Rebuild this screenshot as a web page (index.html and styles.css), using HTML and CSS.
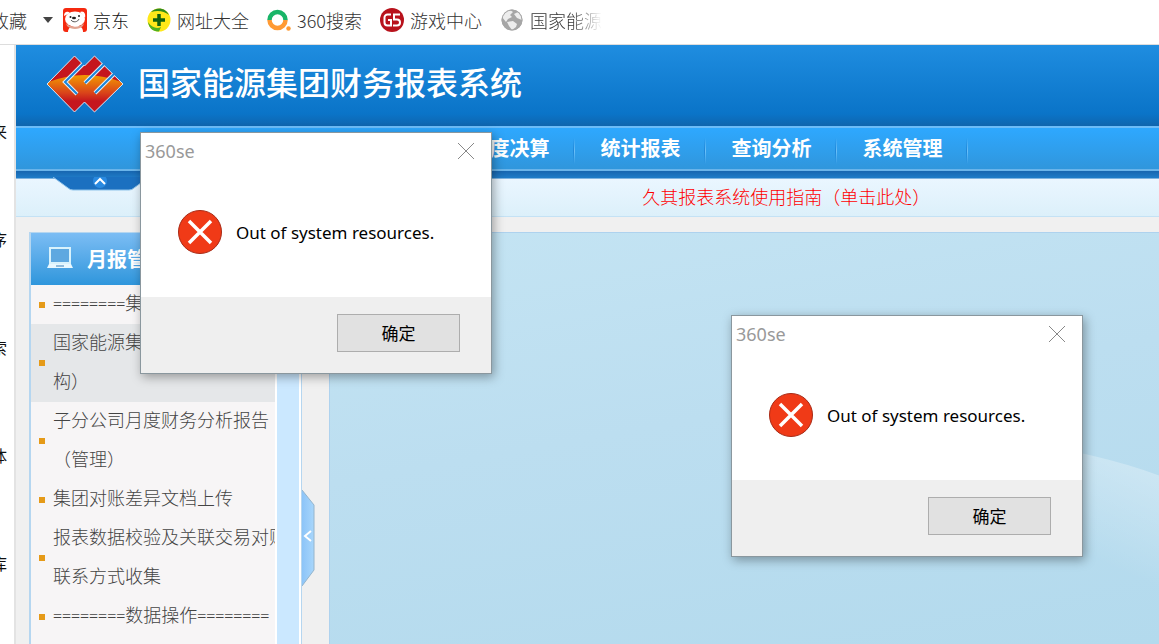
FILE: index.html
```html
<!DOCTYPE html>
<html lang="zh-CN">
<head>
  <meta charset="UTF-8" />
  <title>国家能源集团财务报表系统</title>
  <link rel="stylesheet" href="styles.css">
</head>
<body>
  <nav class="bookmarks">
    <div class="fav"><a href="#">收藏</a></div>
    <span class="caret"></span>
    <a href="#" class="dark">
      <svg width="24" height="24" viewBox="0 0 24 24">
        <rect width="24" height="24" rx="3" fill="#f5290f"/>
        <path d="M5 24c0-4 3-6 8-6s7 2 7 6z" fill="#fff"/>
        <ellipse cx="12" cy="11" rx="10" ry="7.500" fill="#fff"/>
        <path d="M1 8c0-5 4-5 6-3zM17 4c4-2 6 2 5 6z" fill="#fff"/>
        <path d="M3 15c4 5 14 5 18 0l-1 3c-4 4-12 4-16 0z" fill="#e0a592"/>
        <circle cx="7.500" cy="9" r="1" fill="#222"/><circle cx="16" cy="8" r="1" fill="#222"/>
        <ellipse cx="11" cy="10" rx="2" ry="1.200" fill="#222"/>
        <path d="M8 12c2 3 7 2 8-1" stroke="#555" fill="none"/>
      </svg>京东</a>
    <a href="#">
      <svg width="24" height="24" viewBox="0 0 24 24">
        <circle cx="12" cy="12" r="11.500" fill="#ffe81a"/>
        <path d="M4 4C9-1 18-1 22 7c-5-4-11-5-18-3z" fill="#2f8a1c"/>
        <path d="M1 14c4 6 9 7 13 5l-2 4.500C6 24 2 20 1 14z" fill="#4fb020"/>
        <path d="M12 6v12M6 12h12" stroke="#12600f" stroke-width="3.500"/>
      </svg>网址大全</a>
    <a href="#">
      <svg width="24" height="24" viewBox="0 0 24 24">
        <path d="M2.500 12a8 8 0 0 1 16 0" stroke="#19b568" stroke-width="4.500" fill="none"/>
        <path d="M2.500 12a8 8 0 0 0 16 0" stroke="#ff9a33" stroke-width="4.500" fill="none"/>
        <circle cx="21.500" cy="20.500" r="2.200" fill="#ff9a33"/>
      </svg>360搜索</a>
    <a href="#">
      <svg width="24" height="24" viewBox="0 0 24 24">
        <circle cx="12" cy="12" r="12" fill="#b8121c"/>
        <path d="M11 6.500H7.500a3 3 0 0 0-3 3v5a3 3 0 0 0 3 3H11V12H8M20 6.500h-6v5h3a2.800 2.800 0 0 1 0 6h-4" stroke="#fff" stroke-width="2" fill="none"/>
      </svg>游戏中心</a>
    <a href="#" class="fade">
      <svg width="24" height="24" viewBox="0 0 24 24">
        <circle cx="12" cy="12" r="10.500" fill="#a6a6a6"/>
        <path d="M2 9c1-4 4-6 8-7l3 2-3 3 2 2-4 2-2 3zM14 6l4-2c3 2 4 5 4 8l-5-2zM7 14l6-1 4 3-1 3-4 3-3-4z" fill="#fff" opacity=".8"/>
        <circle cx="12" cy="12" r="10" fill="none" stroke="#a6a6a6"/>
      </svg>国家能源</a>
  </nav>

  <div class="window">
    <aside class="rail">
      <span>来</span><span>程序</span><span>搜索</span><span>字体</span><span>仓库</span>
    </aside>

    <div class="app">
      <header class="banner">
        <svg width="78" height="58" viewBox="0 0 78 58">
          <defs>
            <linearGradient id="sun" x1="0" y1="0" x2="0" y2="1">
              <stop offset="0" stop-color="#f39a00"/><stop offset=".7" stop-color="#d9421a"/><stop offset="1" stop-color="#c5161d"/>
            </linearGradient>
            <clipPath id="mark"><path d="M1 29L28.500 1L38.500 11L48.500 1L77 29L48.500 57L38.500 47L28.500 57z"/></clipPath>
          </defs>
          <g clip-path="url(#mark)">
            <rect width="78" height="58" fill="#c5161d"/>
            <path d="M0 28Q39 12 78 28V46H0z" fill="url(#sun)"/>
            <path d="M43 3L19 27L31 39M63 4L39 28M73 14L49 38" fill="none" stroke="#e6f0fa" stroke-width="4"/>
          </g>
          <path d="M1 29L28.500 1L38.500 11L48.500 1L77 29L48.500 57L38.500 47L28.500 57z" fill="none" stroke="#dbe8f5"/>
          <path d="M41 5L19 27L31 39M61 6L39 28M71 16L49 38" fill="none" stroke="#1a84d8" stroke-width="2"/>
        </svg>
        <h1>国家能源集团财务报表系统</h1>
      </header>

      <nav class="menu">
        <a href="#" class="active">月度快报</a>
        <a href="#">年度决算</a>
        <a href="#">统计报表</a>
        <a href="#">查询分析</a>
        <a href="#">系统管理</a>
      </nav>

      <div class="strip">
        <button class="fold" aria-label="收起">
          <svg width="96" height="14" viewBox="0 0 96 14">
            <path d="M0 0L15 11Q17 13 20 13H76Q79 13 81 11L96 0z" fill="#1b70c0"/>
            <path d="M0 0L15 11Q17 13 20 13H76Q79 13 81 11L96 0" fill="none" stroke="#8fc3ea"/>
            <circle cx="47" cy="4" r="7" fill="#2a8ae0"/>
            <path d="M42 7L47 2L52 7" fill="none" stroke="#fff" stroke-width="2"/>
          </svg>
        </button>
      </div>

      <div class="notice"><a href="#">久其报表系统使用指南（单击此处）</a></div>

      <main class="body">
        <section class="side">
          <div class="side-main">
            <h2>
              <svg width="28" height="24" viewBox="0 0 28 24">
                <rect x="4" y="2" width="20" height="15" fill="#5ea8e0" stroke="#d8f2fc" stroke-width="2"/>
                <path d="M3 18h22l2 4H1z" fill="#e8f8ff"/><path d="M10 20h8" stroke="#3a80b8" stroke-width="1"/>
              </svg>月报管理
            </h2>
            <ul>
              <li><a href="#"><span class="eq">========</span>集</a></li>
              <li class="on"><a href="#">国家能源集团<br>构）</a></li>
              <li><a href="#">子分公司月度财务分析报告（管理）</a></li>
              <li><a href="#">集团对账差异文档上传</a></li>
              <li><a href="#" class="long">报表数据校验及关联交易对账<br>联系方式收集</a></li>
              <li><a href="#"><span class="eq">========</span>数据操作<span class="eq">========</span></a></li>
            </ul>
          </div>
          <div class="side-bar"></div>
        </section>
        <div class="split">
          <button aria-label="隐藏菜单">
            <svg width="13" height="96" viewBox="0 0 13 96">
              <defs>
                <linearGradient id="grip"><stop offset="0" stop-color="#8cc4f8"/><stop offset="1" stop-color="#a8d6fb"/></linearGradient>
              </defs>
              <path d="M0 0L12 15V80L0 96z" fill="url(#grip)"/>
              <path d="M0 0L12 15V80L0 96" fill="none" stroke="#93b4cc"/>
              <path d="M9 41L3 46L9 51" fill="none" stroke="#fff" stroke-width="2"/>
            </svg>
          </button>
        </div>
        <section class="content">
          <svg viewBox="0 0 100 100" preserveAspectRatio="none">
            <defs>
              <linearGradient id="glow" x1=".7" y1="0" x2=".5" y2=".55">
                <stop offset="0" stop-color="#fff" stop-opacity=".32"/><stop offset="1" stop-color="#fff" stop-opacity="0"/>
              </linearGradient>
            </defs>
            <path d="M80 50Q92 53 100 59V100H80z" fill="url(#glow)"/>
          </svg>
        </section>
      </main>
    </div>
  </div>

  <div class="dialog first" role="alertdialog">
    <div class="dialog-title">360se
      <button class="close" aria-label="关闭"><svg width="16" height="16" viewBox="0 0 16 16"><path d="M0 0L16 16M16 0L0 16" stroke="#888"/></svg></button>
    </div>
    <div class="dialog-text">
      <svg width="44" height="44" viewBox="0 0 44 44"><circle cx="22" cy="22" r="21.500" fill="#f03a17" stroke="#a82a16"/><path d="M11 11L33 33M33 11L11 33" stroke="#fff" stroke-width="3.500"/></svg>
      Out of system resources.
    </div>
    <div class="dialog-foot"><button class="ok">确定</button></div>
  </div>

  <div class="dialog second" role="alertdialog">
    <div class="dialog-title">360se
      <button class="close" aria-label="关闭"><svg width="16" height="16" viewBox="0 0 16 16"><path d="M0 0L16 16M16 0L0 16" stroke="#888"/></svg></button>
    </div>
    <div class="dialog-text">
      <svg width="44" height="44" viewBox="0 0 44 44"><circle cx="22" cy="22" r="21.500" fill="#f03a17" stroke="#a82a16"/><path d="M11 11L33 33M33 11L11 33" stroke="#fff" stroke-width="3.500"/></svg>
      Out of system resources.
    </div>
    <div class="dialog-foot"><button class="ok">确定</button></div>
  </div>
</body>
</html>
```
FILE: styles.css
```css
* { box-sizing: border-box; }
body { margin: 0; height: 100vh; overflow: hidden; display: flex; flex-direction: column; position: relative; background: #fff; font-family: "Noto Sans", "Noto Sans CJK SC", sans-serif; font-size: 18px; color: #444; }
a { color: inherit; text-decoration: none; }
button { padding: 0; border: none; background: none; font: inherit; cursor: pointer; }
svg { display: block; flex: none; }
h1, h2, ul { margin: 0; padding: 0; }

/* bookmarks */
.bookmarks { height: 45px; padding-bottom: 4px; border-bottom: 1px solid #ddd; display: flex; align-items: center; gap: 18px; font-family: "Noto Sans CJK SC", sans-serif; font-weight: 300; color: #333; white-space: nowrap; }
.bookmarks a { display: flex; align-items: center; gap: 6px; line-height: 24px; }
.bookmarks .fav { width: 27px; overflow: hidden; display: flex; justify-content: flex-end; margin-right: -2px; }
.bookmarks .dark { color: #111; margin-left: -8px; }
.caret { border: 5px solid transparent; border-top: 6px solid #444; border-bottom: 0; }
.fade { -webkit-mask-image: linear-gradient(to right, #000 70%, transparent); mask-image: linear-gradient(to right, #000 70%, transparent); }

.window { flex: 1; display: flex; min-height: 0; }
.rail { width: 16px; padding: 75px 7px 0 0; border-right: 2px solid #e3e3e3; overflow: hidden; display: flex; flex-direction: column; align-items: flex-end; gap: 84px; color: #111; font-size: 16px; line-height: 24px; white-space: nowrap; }
.app { flex: 1; min-width: 0; display: flex; flex-direction: column; background: #f0f0f0; font-family: "Noto Sans CJK SC", sans-serif; }

/* banner and menu */
.banner { height: 81px; padding: 0 30px 4px; display: flex; align-items: center; gap: 14px; background: linear-gradient(#1f8de0, #0a74c8 85%, #0f65ae); }
.banner h1 { padding-bottom: 6px; color: #fff; font-size: 32px; line-height: 40px; font-weight: 500; }
.menu { height: 45px; padding-left: 297px; display: flex; background: linear-gradient(#2ea8ff, #3096dc); border-top: 2px solid #6cbcf8; border-bottom: 2px solid #6ab4ea; }
.menu a { width: 131px; line-height: 40px; text-align: center; color: #fff; font-size: 20px; font-weight: bold; background: linear-gradient(transparent, #6cc0f8, transparent) right 10px / 1px 26px no-repeat, linear-gradient(transparent, #1f86d8, transparent) calc(100% - 1px) 10px / 1px 26px no-repeat; }
.menu .active { width: 117px; margin: 4px 0 0 14px; background: #2176c0; border-radius: 4px; }
.strip { height: 8px; background: linear-gradient(#1766b0, #1f7cc8); border-bottom: 1px solid #7fb4e0; position: relative; }
.fold { position: absolute; left: 37px; top: 6px; }
.notice { height: 38px; padding-left: 54.8%; line-height: 34px; background: linear-gradient(#eaf6ff, #dcf0fa); border-bottom: 1px solid #c4e2f5; color: #f00; font-weight: 300; }

/* sidebar */
.body { flex: 1; min-height: 0; padding: 15px 0 0 13px; display: flex; }
.side { flex: none; display: flex; border: 1px solid #b5d6f0; border-left-width: 2px; border-bottom: 0; background: #fff; }
.side-main { width: 244px; background: #f7f5f6; overflow: hidden; }
.side h2 { height: 52px; padding: 0 0 2px 15px; display: flex; align-items: center; gap: 13px; background: linear-gradient(#7cbdf4, #2f96dc); color: #fff; font-size: 20px; }
.side ul { list-style: none; }
.side li { padding-left: 8px; display: flex; align-items: center; gap: 8px; line-height: 39px; font-weight: 300; }
.side li::before { content: ""; flex: none; width: 6px; height: 6px; background: #e59a18; }
.side li a { flex: none; width: 218px; margin: -2px 0 2px; }
.side li .long { white-space: nowrap; }
.side .on { background: #e5e7e9; }
.eq { font: 16px/20px "Liberation Serif", serif; }
.side-bar { width: 22px; margin: 0 2px; background: #cbe8ff; }
.split { width: 27px; flex: none; padding-top: 258px; }
.content { flex: 1; position: relative; border: 1px solid #aed2ee; border-right: 0; border-bottom: 0; background: linear-gradient(170deg, #c4e4f3, #bcdef0 45%, #b3daed); }
.content svg { position: absolute; width: 100%; height: 100%; }

/* message boxes */
.dialog { position: absolute; width: 352px; background: #fff; border: 1px solid #8a979e; box-shadow: 2px 3px 10px rgba(0,0,0,.35); color: #000; }
.first { left: 140px; top: 132px; }
.second { left: 731px; top: 315px; }
.dialog-title { height: 35px; padding: 0 17px 0 4px; display: flex; align-items: center; justify-content: space-between; color: #999; }
.dialog-text { height: 129px; padding: 0 37px 1px; display: flex; align-items: center; gap: 14px; font-size: 17px; white-space: nowrap; }
.dialog-foot { height: 76px; padding: 17px 31px; background: #efefef; display: flex; justify-content: flex-end; }
.ok { width: 123px; height: 38px; padding-bottom: 2px; background: #e1e1e1; border: 1px solid #adadad; color: #000; font-family: "Noto Sans CJK SC", sans-serif; font-size: 17px; }
```
